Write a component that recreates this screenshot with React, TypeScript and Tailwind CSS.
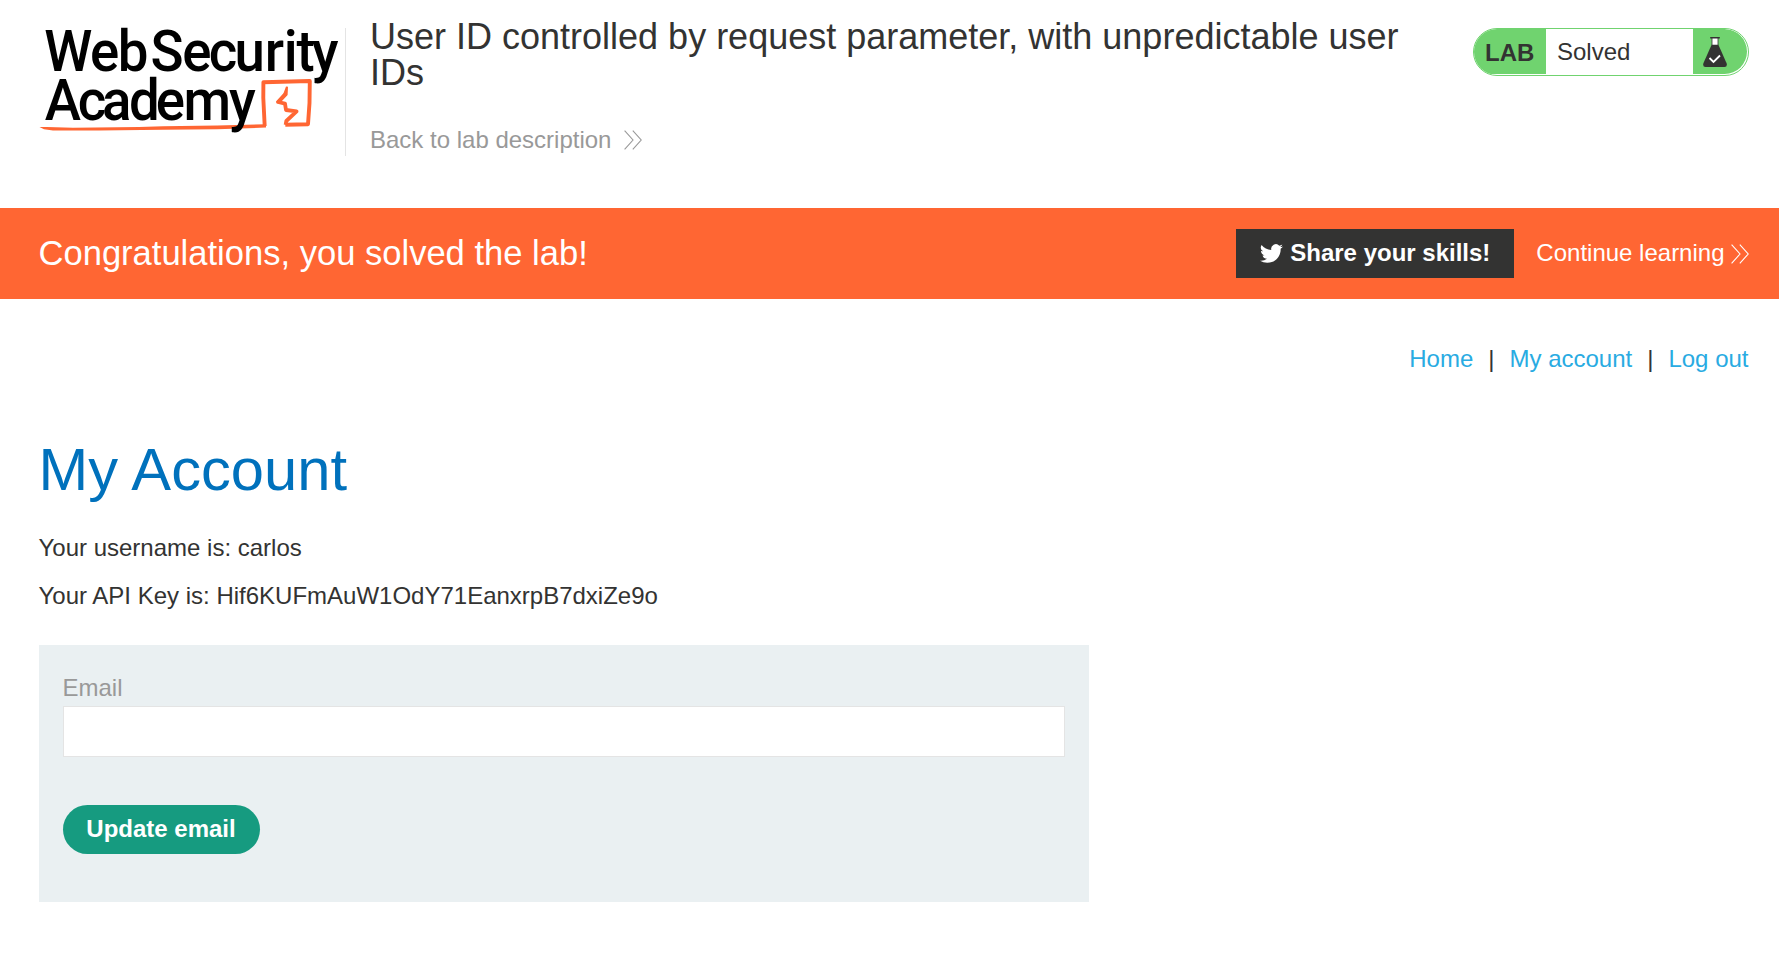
function Chevrons({ className }: { className?: string }) {
  return (
    <svg className={className} width="18" height="20" viewBox="0 0 18 20" fill="none" stroke="currentColor" strokeWidth="1.1">
      <path d="M0.6 0.6 L9 10 L0.6 19.4 M8.8 0.6 L17.2 10 L8.8 19.4" />
    </svg>
  );
}

function Logo() {
  return (
    <svg width="305" height="112" viewBox="0 0 305 112" className="block overflow-visible" fontFamily="Roboto, sans-serif" fontWeight="500">
      <g fill="none" stroke="#ff6633" strokeLinejoin="round">
        <path d="M225.7 98 L224.3 70 L224.4 54.2 L270.8 53 L270.5 75 L269 96.2 L246.3 96.8" strokeWidth="3.9" />
        <path d="M246.6 66 L239 74 L246 75.6 L247 82 L257.6 83.4 L247.3 93 L246.6 96.8" strokeWidth="3.8" />
      </g>
      <path d="M247 58.5 L249 58.8 L248.6 67 L241 75 L237 74 L244.4 65.5 Z" fill="#ff6633" />
      <path d="M0.5 99 L8 99 L34 99.8 L100 99 L124 98.2 L178 97.4 L227 96.2 L227 99.6 L178 101.2 L124 101.8 L60 102.6 L14 102.4 L5 101.2 Z" fill="#ff6633" />
      <g fill="#000" fontSize="57.5" transform="scale(0.95 1)">
        <text x="5.4 53.8 82.9" y="43.3">Web</text>
        <text x="117.5 150.7 178.8 205.8 237.6 257.6 271 287.2" y="43.3">Security</text>
        <text x="6 40.9 66.3 94.8 123 152.2 200" y="92.2">Academy</text>
      </g>
    </svg>
  );
}

function Flask() {
  return (
    <svg width="24" height="30" viewBox="0 0 24 30">
      <path d="M9 1 H15 V8 H9 Z" fill="#fff" />
      <path d="M7.2 0.7 H16.8" stroke="#333332" strokeWidth="1.4" />
      <path d="M9 1 V8 M15 1 V8" stroke="#333332" strokeWidth="0.8" />
      <path d="M8.6 7.8 H15.4 L23.7 26.5 Q24.4 30 21.5 30 H2.5 Q-0.4 30 0.3 26.5 Z" fill="#333332" />
      <path d="M6.5 21 L10.5 25 L17 18.5" fill="none" stroke="#fff" strokeWidth="1.8" />
    </svg>
  );
}

function Bird() {
  return (
    <svg width="23" height="23" viewBox="0 0 24 24" fill="#fff">
      <path d="M23.95 4.57a10 10 0 0 1-2.82.77 4.96 4.96 0 0 0 2.16-2.72c-.95.55-2 .95-3.13 1.18a4.92 4.92 0 0 0-8.38 4.48C7.69 8.1 4.07 6.13 1.64 3.16a4.92 4.92 0 0 0 1.52 6.57 4.9 4.9 0 0 1-2.23-.61v.06c0 2.38 1.7 4.37 3.95 4.82a5 5 0 0 1-2.21.09 4.94 4.94 0 0 0 4.6 3.42A9.87 9.87 0 0 1 0 19.54a13.99 13.99 0 0 0 7.55 2.21c9.05 0 14-7.5 14-13.99 0-.21 0-.42-.02-.63a9.94 9.94 0 0 0 2.46-2.55z" />
    </svg>
  );
}

export default function App() {
  return (
    <div className="flex min-h-[956px] flex-col bg-white font-['Liberation_Sans',Arial,sans-serif] text-[24px] leading-[28px] text-[#333332]">
      <header className="flex h-[208px] items-start pl-[39px] pr-[30px]">
        <div className="mt-7 h-[128px] w-[307px] border-r border-[#e4e4e4]">
          <Logo />
        </div>
        <div className="ml-6 mt-[19px] w-[1060px]">
          <h2 className="text-[36px] leading-[36px]">User ID controlled by request parameter, with unpredictable user IDs</h2>
          <a className="mt-[35px] flex items-center text-[#999999]">
            Back to lab description
            <Chevrons className="ml-[13px]" />
          </a>
        </div>
        <div className="ml-auto mt-7 flex h-12 w-[276px] overflow-hidden rounded-[24px] border border-[#70d36f] pb-px pr-px">
          <p className="w-[72px] bg-[#70d36f] pl-[11px] pt-[10px] font-bold">LAB</p>
          <p className="grow pl-[11px] pt-[9px]">Solved</p>
          <span className="w-[54px] rounded-r-[23px] bg-[#70d36f] pl-[10px] pt-2">
            <Flask />
          </span>
        </div>
      </header>

      <section className="flex h-[91px] items-center bg-[#ff6633] pl-[38.5px] pr-[30px] text-white">
        <h4 className="pb-[2px] text-[34.56px] leading-[40px]">Congratulations, you solved the lab!</h4>
        <button className="ml-auto flex h-[49px] items-center bg-[#333332] px-6 font-bold">
          <Bird />
          <span className="ml-[7.5px] pb-[2px]">Share your skills!</span>
        </button>
        <a className="ml-[22px] flex items-center">
          <span className="pb-[2px]">Continue learning</span>
          <Chevrons className="ml-[6.5px]" />
        </a>
      </section>

      <main className="pl-[38.5px] pr-[30.5px]">
        <nav className="mt-[46px] flex justify-end text-[#29abe2]">
          <a>Home</a>
          <span className="mx-[15px] text-[#333332]">|</span>
          <a>My account</a>
          <span className="mx-[15px] text-[#333332]">|</span>
          <a>Log out</a>
        </nav>
        <h1 className="mt-[62px] text-[59.7px] leading-[70px] text-[#0071bc]">My Account</h1>
        <p className="mt-[29px]">Your username is: carlos</p>
        <p className="mt-5">Your API Key is: Hif6KUFmAuW1OdY71EanxrpB7dxiZe9o</p>
        <form className="mt-[35px] h-[257px] w-[1050.5px] bg-[#eaf0f2] px-6 pt-[29px]">
          <label className="block text-[#999999]">Email</label>
          <input className="mt-1 block h-[51px] w-full border border-[#e4e4e4] bg-white" />
          <button type="button" className="mt-12 h-[49px] w-[197px] rounded-[24.5px] bg-[#169b80] pb-[2px] font-bold text-white">Update email</button>
        </form>
      </main>
    </div>
  );
}
